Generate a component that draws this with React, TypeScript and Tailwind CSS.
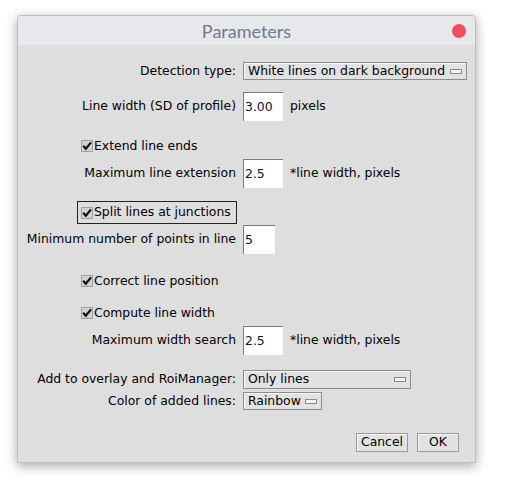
import React from 'react';

const font = { fontFamily: '"DejaVu Sans", sans-serif' };

function Check() {
  return (
    <svg width="12" height="12" viewBox="0 0 12 12" className="shrink-0">
      <rect x="0.5" y="0.5" width="11" height="11" fill="#d2d2d2" stroke="#a0a0a0" />
      <path d="M2.2 5.8 L4.8 8.8 L10 2.4" fill="none" stroke="#111" strokeWidth="2.2" />
    </svg>
  );
}

function Choice({ value, width }: { value: string; width: string }) {
  return (
    <div
      className={`flex items-center justify-between h-full border border-[#8c8c8c] bg-[#e2e2e2] shadow-[inset_1px_1px_0_#f6f6f6] pl-[4px] pr-[4px] ${width}`}
    >
      <span className="text-[12.4px] text-black leading-none">{value}</span>
      <span className="w-[12px] h-[5px] border border-[#8a8a8a] bg-[#f2f2f2] shrink-0" />
    </div>
  );
}

function Field({ value, width = 'w-[40px]' }: { value: string; width?: string }) {
  return (
    <div className={`h-[29px] ${width} bg-white border-t border-l border-[#7c7c7c] flex items-center pl-[1px]`}>
      <span className="text-[12.4px] text-[#101030] leading-none">{value}</span>
    </div>
  );
}

function LabelRow({ label, children }: { label: string; children: React.ReactNode }) {
  return (
    <div className="flex items-center h-full">
      <div className="w-[219px] text-right pr-[1px] text-[12.4px] text-black whitespace-nowrap">{label}</div>
      <div className="ml-[6px] flex items-center h-full gap-[7px]">{children}</div>
    </div>
  );
}

function CheckRow({ label, focused = false }: { label: string; focused?: boolean }) {
  return (
    <div className="pl-[59px] h-full flex items-center">
      <div className={`flex items-center gap-[1px] h-full pl-[3px] pr-[5px] ${focused ? 'border border-[#222]' : 'border border-transparent'}`}>
        <Check />
        <span className="text-[12.4px] text-black whitespace-nowrap">{label}</span>
      </div>
    </div>
  );
}

function Btn({ children, width }: { children: React.ReactNode; width: string }) {
  return (
    <div
      className={`h-[19px] ${width} flex items-center justify-center border border-[#9a9a9a] bg-[#e2e2e2] shadow-[inset_1px_1px_0_#f8f8f8] text-[12.4px] text-black`}
    >
      {children}
    </div>
  );
}

export default function App() {
  return (
    <div className="w-[515px] h-[500px] bg-white pt-[15px] pl-[17px]" style={font}>
      <div className="w-[459px] h-[448px] flex flex-col rounded-t-[4px] border border-[#bdbdbd] bg-[#dedede] shadow-[0_3px_12px_rgba(0,0,0,0.35)] overflow-hidden">
        <div className="h-[29px] shrink-0 bg-[#e7e8eb] relative flex items-center justify-center">
          <span className="text-[18px] leading-none text-[#6c7a93]" style={{ fontFamily: 'Lato, "Noto Sans", sans-serif' }}>
            Parameters
          </span>
          <span className="absolute right-[9px] top-[8px] w-[14px] h-[14px] rounded-full bg-[#f0505a]" />
        </div>

        <div className="flex flex-col">
          <div className="h-[18px] mt-[17px]">
            <LabelRow label="Detection type:">
              <Choice value="White lines on dark background" width="w-[224px]" />
            </LabelRow>
          </div>
          <div className="h-[29px] mt-[12px]">
            <LabelRow label="Line width (SD of profile)">
              <Field value="3.00" />
              <span className="text-[12.4px]">pixels</span>
            </LabelRow>
          </div>
          <div className="h-[16px] mt-[17px]">
            <CheckRow label="Extend line ends" />
          </div>
          <div className="h-[29px] mt-[5px]">
            <LabelRow label="Maximum line extension">
              <Field value="2.5" />
              <span className="text-[12.4px]">*line width, pixels</span>
            </LabelRow>
          </div>
          <div className="h-[23px] mt-[13px]">
            <CheckRow label="Split lines at junctions" focused />
          </div>
          <div className="h-[29px] mt-[1px]">
            <LabelRow label="Minimum number of points in line">
              <Field value="5" width="w-[32px]" />
            </LabelRow>
          </div>
          <div className="h-[16px] mt-[19px]">
            <CheckRow label="Correct line position" />
          </div>
          <div className="h-[16px] mt-[16px]">
            <CheckRow label="Compute line width" />
          </div>
          <div className="h-[29px] mt-[5px]">
            <LabelRow label="Maximum width search">
              <Field value="2.5" />
              <span className="text-[12.4px]">*line width, pixels</span>
            </LabelRow>
          </div>
          <div className="h-[19px] mt-[15px]">
            <LabelRow label="Add to overlay and RoiManager:">
              <Choice value="Only lines" width="w-[168px]" />
            </LabelRow>
          </div>
          <div className="h-[18px] mt-[3px]">
            <LabelRow label="Color of added lines:">
              <Choice value="Rainbow" width="w-[79px]" />
            </LabelRow>
          </div>
          <div className="mt-[23px] flex justify-end gap-[9px] pr-[16px]">
            <Btn width="w-[52px]">Cancel</Btn>
            <Btn width="w-[42px]">OK</Btn>
          </div>
        </div>
      </div>
    </div>
  );
}
